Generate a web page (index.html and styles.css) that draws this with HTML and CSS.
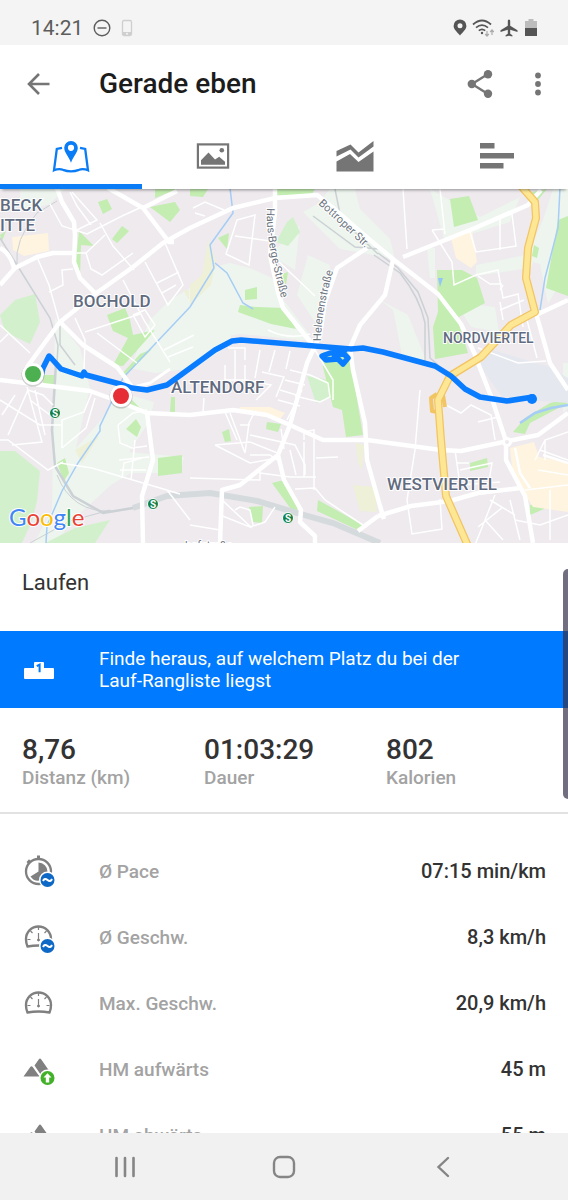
FILE: index.html
```html
<!DOCTYPE html>
<html lang="de">
<head>
  <meta charset="UTF-8">
  <meta name="viewport" content="width=device-width, initial-scale=1.0">
  <title>Gerade eben</title>
  <link rel="stylesheet" href="styles.css">
</head>
<body>
  <div class="status-bar">
    <div class="status-left">
      <span class="clock">14:21</span>
      <svg width="18" height="18" viewBox="0 0 18 18" fill="none" stroke="#5c5c5c" stroke-width="1.4"><circle cx="9" cy="9" r="7.8"/><path d="M4.5 9h9"/></svg>
      <svg width="12" height="18" viewBox="0 0 12 18"><rect x="1.5" y="1.5" width="9" height="15" rx="1.5" fill="none" stroke="#cfcfcf" stroke-width="1.3"/><path d="M1 13h10v3H1z" fill="#cfcfcf"/><circle cx="6" cy="14.7" r="1" fill="#f4f4f4"/></svg>
    </div>
    <div class="status-right">
      <svg width="14" height="17" viewBox="0 0 14 17"><path fill="#555" fill-rule="evenodd" d="M7 .5A6.4 6.4 0 0 0 .6 6.9C.6 10.5 4.5 13 7 16.500 9.500 13 13.400 10.500 13.400 6.900A6.400 6.400 0 0 0 7 .5zM7 4.300a2.500 2.500 0 1 1 0 5 2.500 2.500 0 0 1 0-5z"/></svg>
      <svg width="23" height="18" viewBox="0 0 23 18" fill="none" stroke="#555" stroke-width="1.7"><path d="M1 5.500Q10 -2.500 19 5.500M4 8.600q6-5 12 0M6.800 11.600q3.200-2.600 6.400 0"/><circle cx="10" cy="14" r="1.200" fill="#555" stroke="none"/><path stroke="#aaa" stroke-width="1.200" d="M15 12v5M13.200 15l1.800 2 1.800-2M20 16v-5M18.200 13l1.800-2 1.800 2"/></svg>
      <svg width="20" height="18" viewBox="0 0 20 18"><path fill="#555" d="M9 .5c.8 0 1.200.8 1.200 1.800v4.500l7.300 4.400v1.700l-7.300-2.200v4l2.200 1.500V17.500L9 16.700l-3.400.8v-1.300l2.200-1.500v-4L.5 12.900v-1.700l7.300-4.400V2.300C7.800 1.300 8.200.5 9 .5z"/></svg>
      <svg width="12" height="17" viewBox="0 0 12 17"><path fill="#bdbdbd" d="M3.500 0h5v2H12v7H0V2h3.500z"/><path fill="#555" d="M0 9h12v8H0z"/></svg>
    </div>
  </div>

  <header class="app-bar">
    <button class="icon-button" aria-label="Zurück">
      <svg width="24" height="24" viewBox="0 0 24 24" fill="none" stroke="#757575" stroke-width="2.600"><path d="M23.500 12H3M13 2L3 12l10 10"/></svg>
    </button>
    <h1>Gerade eben</h1>
    <button class="icon-button share" aria-label="Teilen">
      <svg width="28" height="30" viewBox="0 0 28 30" fill="#757575"><path d="M22 5L6 15l16 10" fill="none" stroke="#757575" stroke-width="2.400"/><circle cx="22" cy="5.200" r="4.200"/><circle cx="5.800" cy="15" r="4.200"/><circle cx="22" cy="24.800" r="4.200"/></svg>
    </button>
    <button class="icon-button more" aria-label="Mehr">
      <svg width="8" height="24" viewBox="0 0 8 24" fill="#757575"><circle cx="4" cy="3.500" r="2.900"/><circle cx="4" cy="12" r="2.900"/><circle cx="4" cy="20.500" r="2.900"/></svg>
    </button>
  </header>

  <nav class="tabs">
    <button class="tab active" aria-label="Karte">
      <svg width="38" height="34" viewBox="0 0 38 34"><path d="M10 8.800L4.800 10 2 31.300q5-2.200 9-.5 8 3 16 0 4-1.700 9 .5L33.200 10 28 8.800" fill="none" stroke="#0a7cf5" stroke-width="2.300"/><path fill="#0a7cf5" fill-rule="evenodd" d="M19 2a6.800 6.800 0 0 0-6.800 6.800c0 5 4.300 8 6.800 15 2.500-7 6.800-10 6.800-15A6.800 6.800 0 0 0 19 2zm0 3.700a3.100 3.100 0 1 1 0 6.200 3.100 3.100 0 0 1 0-6.200z"/></svg>
    </button>
    <button class="tab" aria-label="Fotos">
      <svg width="34" height="26" viewBox="0 0 34 26"><rect x="1.900" y="1.400" width="30.200" height="23.200" fill="none" stroke="#757575" stroke-width="2.200"/><path fill="#757575" d="M5 21.800v-4.600l7.500-7.700 6.500 7 4.200-2.800 5.800 5.100v3z"/><circle cx="25.800" cy="7.200" r="2.300" fill="#757575"/></svg>
    </button>
    <button class="tab" aria-label="Diagramm">
      <svg width="38" height="32" viewBox="0 0 38 32" fill="#757575"><path d="M.5 11L14.500 4.500l8 8L37.500 1v5.500L22.500 17.500l-8-8L.5 16.500zM.5 31.500V21.500L14 14l8.500 8L37.500 11.500v20z"/></svg>
    </button>
    <button class="tab" aria-label="Details">
      <svg width="34" height="26" viewBox="0 0 34 26" fill="#757575"><path d="M0 0h14.500v5.500H0zM0 10h34v5.500H0zM0 20h23.500v5.500H0z"/></svg>
    </button>
  </nav>

  <main>
    <svg class="map" viewBox="0 189 568 354" preserveAspectRatio="xMidYMid slice" role="img" aria-label="Karte der Strecke">
      <rect x="0" y="189" width="568" height="354" fill="#eeeaee"/>
      <!-- parks and open land -->
      <g fill="#edf5ee">
        <path d="M210 268l20-5 20 5 22 10 10 20 25 33 5 10-72-7-28 5-15 8-3-20z"/>
        <path d="M150 320l20-20 20-12 30-20 12 75-37 25-40 5-25-5z"/>
        <path d="M330 189h25l5 20 30 30 5 20-55-10-25-25-12-12 14-8zM300 225l-30 30 25 15zM308 255l22 10-8 68-25-38z"/>
        <path d="M55 318l25 30 10 40-14 60 25-28 18-28 35 10-5 20-20 30 55 5-3 16-50 0-20 12-38 35-23 30H30l22-40z"/>
        <path d="M20 189h45l-15 15-30 8zM380 300l28 15 20 50-25-5-10-50zM430 189l50 28 40-20-10 25-65 20zM476 265l60-12-5 15-55 8zM525 260l18-40 10-31h15v80l-20 35-8-40z"/>
        <path d="M563 363v50l5-5v-45zM455 302l40 5 4 25-28-5zM427 248h8v30h-5z"/>
      </g>
      <g fill="#d3f0cd">
        <path d="M0 315l15-15 20-6 5 28-10 22-25-12zM0 451l15 0 25 20-3 30-5 20-10 22H0zM287 222l6-5 7 15-12 14-12-4zM307 376l22 4 2 18-15 5zM75 528l35-8-15 23H45z"/>
      </g>
      <g fill="#c3edb1">
        <path d="M79 231l15 15-13-1-1 30 17 17-22-22zM98 202l9-3 5 10-9 5zM112 239l10-13 7 5-12 12zM150 207l25-5 5 8-10 12zM155 188h25l-25 10zM0 235l6-4-4 10zM218 238l11-5-2 16z"/>
        <path d="M107 315l18-7 5 12 3 15 22-5-32 36-10-1 15-27-15-7zM190 189h18l-5 8-13-1zM275 189h40l-5 8-35-2zM279 275l9-3-2 13zM245 290l12-3 0 12-12 1z"/>
        <path d="M240 305l17 2 27 1 12 21-25-5-33-12zM323 352h26l14 83-17 2-4-27-9-3-10-40zM120 376l20-22 12-5-25 25zM126 429l10-10 5 8-4 10zM158 458l24-3 0 18-24 3zM57 463l8-5 4 15-5 8zM43 375h12v9H43z"/>
        <path d="M267 422l14 2-3 8-12-3zM222 432l7-3 2 12-6 1zM249 507l14-1-1 17-9-1zM272 483l12-3 14 26-2 10zM318 500l45 25-3 6-43-20zM132 400l8 8-10-3zM171 397h4v15h-5z"/>
        <path d="M450 199l19-3 9 24-24 7zM437 270l25 0 15 8 8 25-28 15 11 35-33 6-2-32 5-15zM534 245l5 3-2 10-5-2zM558 220l10-4v80l-22-8zM532 192l15-3-10 12zM470 463l17-5 1 9-18 4zM530 505l14-3 0 7-14 6zM513 432l12-14 25-15 18-4v4l-38 20-5 11z"/>
      </g>
      <g fill="#fef4df">
        <path d="M12 237l36-4 1 18-25 5-11-6zM450 235l22-5 5 32-6 6-15-10-3-12zM240 407h30l15 6-5 6-42-7zM510 448l24-6 5 15 29 5v50l-35-5-20-30z"/>
      </g>
      <path d="M75 450l24-14-17 27zM208 240l8 20-5 25-21 20v-20l12-10zM353 485l22 2 2 25-17-1zM356 443l8 2-2 25-4-8zM183 290h6v10z" fill="#eef0d8"/>
      <path d="M477 362l15-12 55 16 21 12v25l-65-5z" fill="#e5e8ef"/>
      <path d="M438 278h5l-3 9z" fill="#93c5f8"/>
      <!-- railways -->
      <g fill="none" stroke="#cbd1d4" stroke-width="1.500">
        <path d="M0 238l17 27 33 53 8 27-1 18"/>
        <path d="M17 265q-3-25 20-52l20-12" stroke-width="1"/>
        <path d="M56 363l-4 67 3 36 18 30 30 17 30-5 34-12 23-2 20-1" stroke-width="2.500"/>
        <path d="M57 475q15 38 55 36M30 543l40-22 40-11" stroke-width="1"/>
        <path d="M60 320l0 25 15 20"/>
        <path d="M378 253l20 15 20 24 10 26 2 40 8 7M374 255l26 18q20 25 25 50v40M313 216l42 31 25 2M335 189l6 30 37 35"/>
        <path d="M133 508l34-12 43-3 47 8 40 12 36 10 47 20" stroke="#d5dadd" stroke-width="6"/>
      </g>
      <!-- water -->
      <g fill="none" stroke="#a6cdf5" stroke-width="1.500">
        <path d="M230 188l3 25-23 32 4 23-24 39-53 56-14 15-23 48 0 5-22 32-16 28-15 35-1 17M215 263l12 10 16 30 10 6M560 188l-2 40-13 50-5 32"/>
        <path d="M520 423l15-10 16-5 17-3" stroke-width="2.500"/>
      </g>
      <!-- side streets -->
      <g fill="none" stroke="#fff" stroke-width="1.500">
        <path d="M50 204l12 22 25 8 35-18 22-10M70 192l7 14 14 19M77 230l20-10-25-28M100 223l13 23 21 24M87 253h-10M86 253l19-18M86 253l5 16 11 6 31-22M37 257l12 28 10 36M49 292l14-7-1-15 11-1M123 280l22 42 25 40M145 262l23 43 15-20-18-42M157 283l22-11M162 293l14-8"/>
        <path d="M75 318l10 22-1 30M85 332l55-18M133 315l12 22 10-12-10-15-12 5M97 333l40 30M0 325l30 28M0 342l8-8M164 350l30-15M168 357l25-10"/>
        <path d="M193 208l12-6 19 8M195 213l10 3M237 220l18-5-6 50-23-11zM235 236l35 5M275 258l40 38M268 330q20 10 42 4M470 232l6 20 40-6-4-32M500 218v32M403 189l4 60M440 189l5 45M432 230l20 32 2 23 22-10 22-5 5 28 15-4 5 33M432 230l12-1M478 276l12 8h12M500 310l24-10M500 302l3 18"/>
        <path d="M0 440l8 0 40 30 15-8M8 435l20-45 15 5 10 10M0 400l40 25h22M15 395l-13 20M27 387l15 55-30 3M30 400l20 15M35 390l10 45M62 448v-28l22-8 8-20M62 448l24-20 9-30M60 463l32 5 68 20 20 6M118 425l15-12 14-3M118 425l2 18 12 5 15-2M119 460l30-3M120 470l26 0M122 478l2-15 18-5M135 440l-4 40M167 490l23 30"/>
        <path d="M203 413l1-15M225 412l12 28M230 413l15 40 4-30 5-10M240 425h10M250 435l45 10 10 20 0 10M215 445l35-3 30 12M215 445l35 18 28-5M250 455l20 0 7 5M190 478l70 2 0-10M260 473l30 4 26 0M222 500l30 28M220 515l30 12 15-5 10-15M235 510l5-3 10 3 3 15M190 525l30 5"/>
        <path d="M284 449l-3-20M304 440v-8l10-2v60M304 442v35M290 450l6 25M316 458l22-1M295 489l20-1 10 12 38 25M225 365l0 15 20 0 0-15M235 350v30M228 348h17v12M260 350l-5 28M275 350l-6 22M290 351l-4 18M246 380l25 5-15 15M262 372l22 5-8 20M290 370l20 5 18 8 2 14-10 5-25-6M285 380l20 5M280 390l20 6M278 400l22 6M287 420l15-30M315 350l18 30 0 20"/>
        <path d="M420 390l-5 60 -8 50 5 34 30-5-2-30M446 405l15 8 10-8 20 10 4 25M478 422l20-5M455 450l5 35 40-3M457 463h12M460 470l32-7-3 18M495 495l-20 50M485 520l18 20M478 527l25-20M490 500l25 15M510 500l10 40M515 520l25 5 28-10M525 490l43-5M535 460l10-20 23-8M540 450l28 10M545 440v20M538 470l30 5M550 490v50"/>
        <path d="M478 348l40 15 28-2M527 320l10 38M500 290l3-5"/>
        <path d="M515 448l5 25 10 15M543 455l25 8" stroke-width="2.500"/>
      </g>
      <!-- main streets -->
      <g fill="none" stroke="#fff" stroke-width="4.500" stroke-linejoin="round">
        <path d="M0 285l15-17 22-11 16-4h20M0 248q10 5 14 20M57 188l5 14 12 20 1 13-1 27 6 16 15 15"/>
        <path d="M27 367l33-45 35-28 38-27 30-24 27-15 43-20 42-10 42-3 15 12 38 33 23 19 45 35 23 30 15 33"/>
        <path d="M108 188l35 20 34-17M143 208l26 34 5 0M60 322l23 23 34 22 15 20M275 188v24l-5 43 8 37 5 16 29 36"/>
        <path d="M367 248l-30 20-12 34-5 33-13 28-17 62-12 30 6 25 17 30-1 12 15 14 0 12M278 455l-38 30-18 5-2 53"/>
        <path d="M393 260l-8 35-25 30-10 23 3 22 12 53 2 37 13 46 4 13M378 516l-20 15"/>
        <path d="M0 380l50 6 40 5 25 9 32 13 43 2 43-5 34 5 23 10 33 15 44 0 74 10 20 1 47-10 30-6 30-22"/>
        <path d="M147 413l6 47-11 36 1 47M506 441v19l19 36 8 47M378 516l33-10 39-5 28-8 43-5"/>
        <path d="M403 257l72-29 53-23 13-15M536 315l32-15M478 363l14 36 14 42M536 313l14 50 18 27"/>
        <path d="M130 388l20-5 20-14" stroke-width="3"/>
      </g>
      <circle cx="507" cy="442" r="5" fill="#fff"/>
      <circle cx="507" cy="442" r="2" fill="#eeeaee"/>
      <g fill="none" stroke-linejoin="round">
        <path d="M437 394l-6 4 1 13 6 1M443 395l2 12" stroke="#f2c462" stroke-width="4"/>
        <path d="M521 186l14 16 1 16-8 30-2 30 9 34-24 13-30 32-31 19-12 24 3 40 5 56 22 50" stroke="#f2c462" stroke-width="8"/>
        <path d="M521 186l14 16 1 16-8 30-2 30 9 34-24 13-30 32-31 19-12 24 3 40 5 56 22 50" stroke="#fde795" stroke-width="5.500"/>
      </g>

      <g class="street-name">
        <path id="hausberge" d="M267 208q-1 12 1 24 1 22 15 72" fill="none"/>
        <path id="bottroper" d="M318 204q22 20 54 50" fill="none"/>
        <path id="helenen" d="M321 341q0-30 14-76" fill="none"/>
        <text><textPath href="#hausberge">Haus-Berge-Straße</textPath></text>
        <text><textPath href="#bottroper">Bottroper Str.</textPath></text>
        <text><textPath href="#helenen">Helenenstraße</textPath></text>
        <text x="185" y="549">hofstraße</text>
      </g>
      <g class="district">
        <text x="0" y="211">BECK</text>
        <text x="0" y="231">ITTE</text>
        <text x="73" y="307">BOCHOLD</text>
        <text x="171" y="393">ALTENDORF</text>
        <text x="387" y="490">WESTVIERTEL</text>
        <text class="small" x="443" y="343">NORDVIERTEL</text>
      </g>
      <g class="station">
        <circle cx="55" cy="413" r="5.500"/><text x="55" y="417">S</text>
        <circle cx="153" cy="504" r="5.500"/><text x="153" y="508">S</text>
        <circle cx="288" cy="518" r="5.500"/><text x="288" y="522">S</text>
      </g>

      <path d="M33 378l8-2 2-8 6-12 3 3 9 10 21 7 2-4 2 3 34 9 12 4 15 2 20-5 48-35 17-9 9-1 110 9 12-1 20 4 52 14 16 10 14 13 15 8 27 4 26-4M345 350l-12 2-11 4 4 4 12-1 5 5 5-6-4-4-10 1" fill="none" stroke="#0a7cff" stroke-width="5.500" stroke-linejoin="round" stroke-linecap="round"/>
      <circle cx="532" cy="399" r="5" fill="#0a7cff"/>
      <circle cx="33" cy="375" r="11.500" fill="#000" opacity=".18"/>
      <circle cx="33" cy="374" r="9.500" fill="#4caf50" stroke="#fff" stroke-width="3"/>
      <circle cx="121" cy="397" r="11.500" fill="#000" opacity=".18"/>
      <circle cx="121" cy="396" r="9.500" fill="#e62e36" stroke="#fff" stroke-width="3"/>
      <text class="google" x="9" y="526"><tspan fill="#4285f4">G</tspan><tspan fill="#ea4335">o</tspan><tspan fill="#fbbc05">o</tspan><tspan fill="#4285f4">g</tspan><tspan fill="#34a853">l</tspan><tspan fill="#ea4335">e</tspan></text>
    </svg>

    <h2 class="sport">Laufen</h2>

    <a class="banner" href="#">
      <svg width="30" height="20" viewBox="0 0 30 20"><path fill="#fff" d="M1 8h9V3q0-1 1-1h8q1 0 1 1v5h9q1 0 1 1v9q0 1-1 1H1q-1 0-1-1V9q0-1 1-1z"/><path d="M12.800 6.200l2.800-1.600v7.600" fill="none" stroke="#007aff" stroke-width="2"/></svg>
      <span>Finde heraus, auf welchem Platz du bei der<br>Lauf-Rangliste liegst</span>
    </a>

    <dl class="summary">
      <div><dt>Distanz (km)</dt><dd>8,76</dd></div>
      <div><dt>Dauer</dt><dd>01:03:29</dd></div>
      <div><dt>Kalorien</dt><dd>802</dd></div>
    </dl>

    <table class="details">
      <tr>
        <td class="icon"><svg width="34" height="34" viewBox="0 0 34 34"><circle cx="16.500" cy="17.500" r="12.500" fill="none" stroke="#808080" stroke-width="2.300"/><path fill="#808080" d="M15 1.500h3v4h-3zM4.500 8L7 5.200l2.300 2.300-2.800 2.800zM16.500 8.500v9l-8 5a9.300 9.300 0 0 0 17-5 9 9 0 0 0-9-9z"/><circle cx="25.500" cy="26" r="8.500" fill="#fff"/><circle cx="25.500" cy="26" r="7" fill="#0d69c5"/><path d="M21 27q1.500-3.500 4.500-1t4.500-1" fill="none" stroke="#fff" stroke-width="2"/></svg></td>
        <th scope="row">Ø Pace</th>
        <td class="value">07:15 min/km</td>
      </tr>
      <tr>
        <td class="icon"><svg width="34" height="34" viewBox="0 0 34 34"><g id="gauge" fill="none" stroke="#808080"><path d="M5.500 26.500Q4 23 4 19a12.500 12.500 0 0 1 25 0q0 4-1.500 7.500-11-2-22 0z" stroke-width="2.400"/><path d="M16.500 7v3M5.500 19.500h3M27.500 19.500h-3M8.500 11l2 2M24.500 11l-2 2M16.500 13v8" stroke-width="1.200"/><circle cx="16.500" cy="20" r="1" fill="#808080"/></g><circle cx="25.500" cy="26" r="8.500" fill="#fff"/><circle cx="25.500" cy="26" r="7" fill="#0d69c5"/><path d="M21 27q1.500-3.500 4.500-1t4.500-1" fill="none" stroke="#fff" stroke-width="2"/></svg></td>
        <th scope="row">Ø Geschw.</th>
        <td class="value">8,3 km/h</td>
      </tr>
      <tr>
        <td class="icon"><svg width="34" height="34" viewBox="0 0 34 34"><use href="#gauge"/></svg></td>
        <th scope="row">Max. Geschw.</th>
        <td class="value">20,9 km/h</td>
      </tr>
      <tr>
        <td class="icon"><svg width="34" height="34" viewBox="0 0 34 34"><g id="mountains" fill="#808080"><path d="M1.500 24.500l6.800-9.500q1.200-1.500 2.400 0l6.800 9.500zM12.500 13.500l4.200-6q1.300-1.800 2.600 0L28 20l-6 4.500h-2z"/></g><circle cx="25.500" cy="26" r="8.500" fill="#fff"/><circle cx="25.500" cy="26" r="7" fill="#43b02a"/><path d="M25.500 21.300l4 4.300h-2.300v4.900h-3.400v-4.900h-2.300z" fill="#fff"/></svg></td>
        <th scope="row">HM aufwärts</th>
        <td class="value">45 m</td>
      </tr>
      <tr>
        <td class="icon"><svg width="34" height="34" viewBox="0 0 34 34"><use href="#mountains"/><circle cx="25.500" cy="26" r="8.500" fill="#fff"/><circle cx="25.500" cy="26" r="7" fill="#e62e36"/><path d="M25.500 30.500l4-4.300h-2.300v-4.900h-3.400v4.900h-2.300z" fill="#fff"/></svg></td>
        <th scope="row">HM abwärts</th>
        <td class="value">55 m</td>
      </tr>
    </table>
  </main>

  <div class="edge-handle"></div>

  <footer class="system-nav">
    <button aria-label="Letzte Apps"><svg width="22" height="22" viewBox="0 0 22 22" stroke="#858585" stroke-width="2.600" stroke-linecap="round"><path d="M2.500 2v18M11 2v18M19.500 2v18"/></svg></button>
    <button aria-label="Startseite"><svg width="24" height="24" viewBox="0 0 24 24"><rect x="2" y="2" width="20" height="20" rx="6" fill="none" stroke="#858585" stroke-width="2.400"/></svg></button>
    <button aria-label="Zurück"><svg width="14" height="22" viewBox="0 0 14 22" fill="none" stroke="#858585" stroke-width="2.400" stroke-linecap="round"><path d="M12 2L2.500 11l9.500 9"/></svg></button>
  </footer>
</body>
</html>
```
FILE: styles.css
```css
* {
  box-sizing: border-box;
}

body {
  margin: 0;
  height: 100vh;
  display: flex;
  flex-direction: column;
  font-family: Roboto, "Liberation Sans", sans-serif;
  color: #333;
  background-color: #fff;
}

button {
  border: none;
  padding: 0;
  background: none;
  cursor: pointer;
}

svg {
  display: block;
}

.status-bar {
  flex: none;
  display: flex;
  justify-content: space-between;
  align-items: center;
  height: 45px;
  padding: 10px 31px 0;
  background-color: #f4f4f4;
}

.status-left, .status-right {
  display: flex;
  align-items: center;
}

.status-left {
  gap: 10px;
}

.status-right {
  gap: 5px;
}

.clock {
  font-size: 21px;
  line-height: 24px;
  color: #5c5c5c;
}

.app-bar {
  flex: none;
  display: flex;
  align-items: center;
  height: 78px;
  padding: 0 26px;
}

.app-bar h1 {
  flex: 1;
  margin: 0 0 0 49px;
  font-size: 28px;
  line-height: 32px;
  font-weight: 500;
  color: #1c1c1c;
}

.icon-button.more {
  margin-left: 40px;
}

.tabs {
  flex: none;
  display: flex;
  height: 66px;
  box-shadow: 0 3px 3px -2px rgba(0, 0, 0, .4);
  position: relative;
}

.tab {
  flex: 1;
  display: flex;
  justify-content: center;
  align-items: center;
  padding-top: 4px;
  border-bottom: 5px solid transparent;
}

.tab.active {
  border-bottom-color: #0a7cf5;
}

main {
  flex: 1;
  min-height: 0;
  overflow: hidden;
}

.map {
  width: 100%;
  height: 354px;
}

.district {
  font-size: 17px;
  font-weight: 500;
  fill: #616b80;
  stroke: #fff;
  stroke-width: 2px;
  paint-order: stroke;
}

.district .small {
  font-size: 14px;
}

.street-name {
  font-size: 11px;
}

.street-name text {
  fill: #6b7480;
  stroke: #fff;
  stroke-width: 2px;
  paint-order: stroke;
}

.station circle {
  fill: #128049;
  stroke: #fff;
}

.station text {
  font-size: 10px;
  font-weight: 700;
  text-anchor: middle;
  fill: #fff;
}

.google {
  font-family: Lato, sans-serif;
  font-size: 24px;
  stroke: #fff;
  stroke-width: 2px;
  paint-order: stroke;
}

.sport {
  margin: 0;
  padding: 26px 22px 34px;
  font-size: 22px;
  line-height: 28px;
  font-weight: 400;
}

.banner {
  display: flex;
  align-items: center;
  gap: 45px;
  min-height: 77px;
  padding: 16px 24px;
  font-size: 19px;
  line-height: 22px;
  color: #fff;
  background-color: #007aff;
  text-decoration: none;
}

.summary {
  display: grid;
  grid-template-columns: repeat(3, 1fr);
  gap: 22px;
  margin: 0;
  padding: 26px 22px 22px;
  border-bottom: 2px solid #e2e2e2;
}

.summary div {
  display: flex;
  flex-direction: column-reverse;
}

.summary dt {
  font-size: 19px;
  line-height: 24px;
  font-weight: 500;
  color: #a3a3a3;
}

.summary dd {
  margin: 0;
  font-size: 28px;
  line-height: 32px;
  font-weight: 500;
}

.details {
  width: 100%;
  margin-top: 24px;
  border-collapse: collapse;
  font-size: 19px;
}

.details tr {
  height: 66px;
}

.details td, .details th {
  padding: 0;
  font-weight: 500;
}

.details .icon {
  width: 99px;
  padding-left: 22px;
}

.details th {
  text-align: left;
  color: #a3a3a3;
}

.details .value {
  padding-right: 22px;
  text-align: right;
  font-size: 20px;
}

.edge-handle {
  position: fixed;
  top: 569px;
  right: 0;
  width: 5px;
  height: 230px;
  border-radius: 5px 0 0 5px;
  background-color: rgba(52, 48, 72, .7);
}

.system-nav {
  flex: none;
  display: flex;
  justify-content: center;
  height: 67px;
  background-color: #f1f1f1;
}

.system-nav button {
  width: 28%;
  display: flex;
  justify-content: center;
  align-items: center;
}
```
